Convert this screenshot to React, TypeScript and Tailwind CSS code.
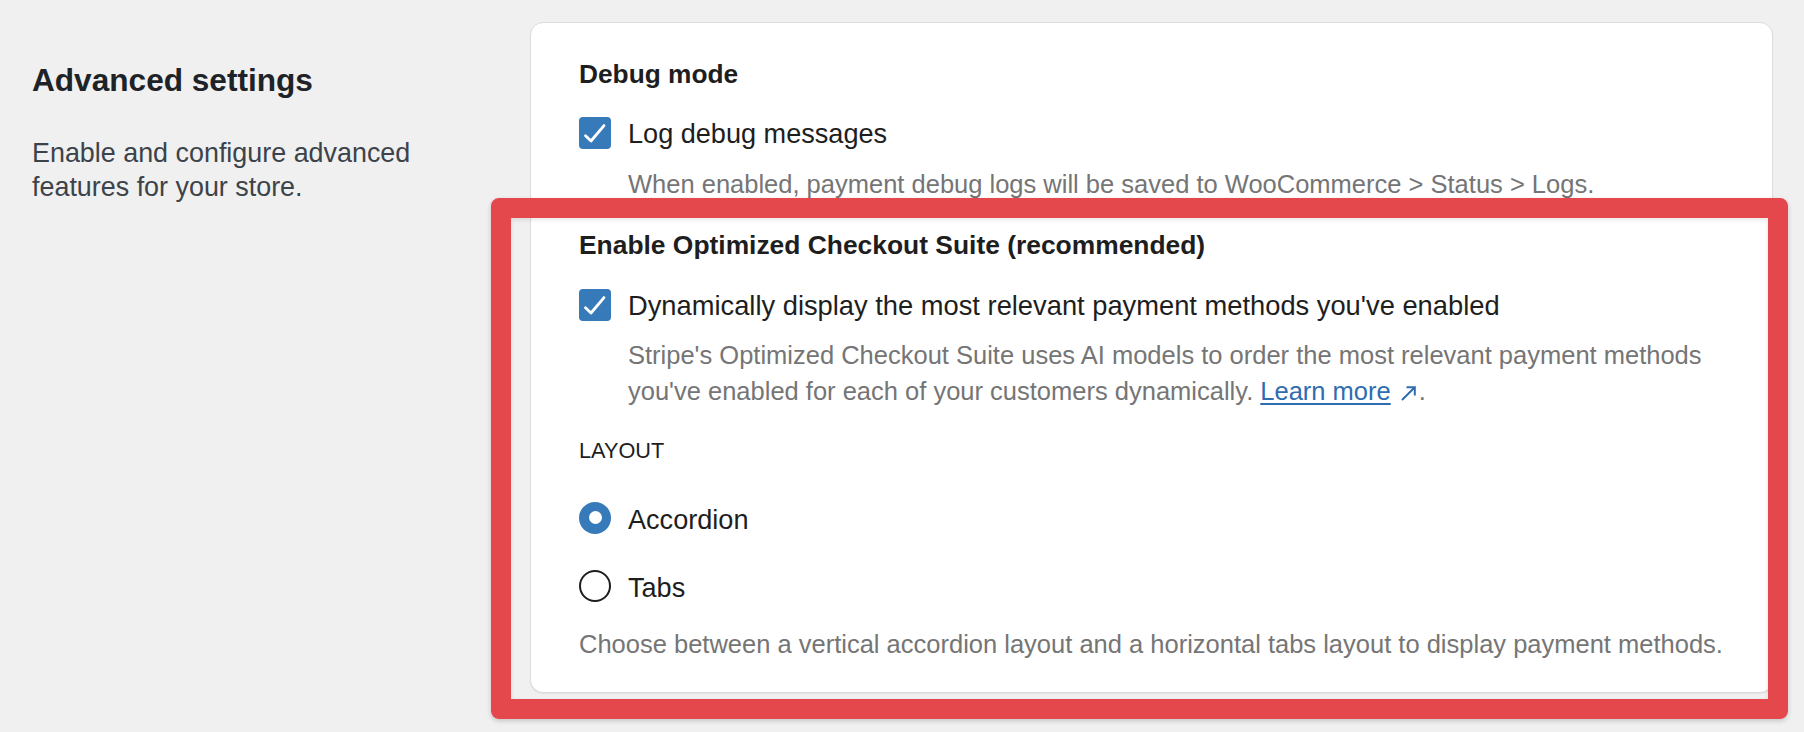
import React from "react";

function Checkbox() {
  return (
    <span className="w-[32px] h-[32px] shrink-0 rounded-[4px] bg-[#377ab9] flex items-center justify-center">
      <svg width="32" height="32" viewBox="0 0 32 32" fill="none">
        <polyline points="6.5,18.8 12,24 25,8.6" stroke="#ffffff" strokeWidth="2.8" strokeLinecap="round" strokeLinejoin="round" />
      </svg>
    </span>
  );
}

function Radio({ checked }: { checked: boolean }) {
  if (checked) {
    return (
      <span className="w-[32px] h-[32px] shrink-0 rounded-full bg-[#377ab9] flex items-center justify-center">
        <span className="w-[13px] h-[13px] rounded-full bg-white" />
      </span>
    );
  }
  return <span className="w-[32px] h-[32px] shrink-0 rounded-full border-2 border-[#1e1e1e] bg-white" />;
}

export default function App() {
  return (
    <div className="relative w-[1804px] h-[732px] overflow-hidden bg-[#f0f0f0] flex font-['Liberation_Sans',Arial,sans-serif]">
      {/* Left column */}
      <div className="w-[530px] shrink-0 pl-[32px] pt-[60px]">
        <h2 className="text-[31.6px] leading-[40px] font-bold text-[#1d2327]">Advanced settings</h2>
        <p className="mt-[36px] max-w-[420px] text-[26.9px] leading-[34.4px] text-[#3c434a]">
          Enable and configure advanced features for your store.
        </p>
      </div>

      {/* Card */}
      <div className="w-[1243px] shrink-0 self-start mt-[22px] bg-white border border-[#dcdcde] rounded-[13px] shadow-[0_1px_1px_rgba(0,0,0,0.06)] px-[48px] pt-[33px] pb-[30px] flex flex-col">
        <div className="text-[26.3px] leading-[36px] font-bold text-[#1e1e1e] whitespace-nowrap">Debug mode</div>

        <div className="mt-[25px] flex items-start gap-[17px]">
          <Checkbox />
          <span className="text-[27.1px] leading-[34px] text-[#1e1e1e] whitespace-nowrap">Log debug messages</span>
        </div>

        <div className="mt-[14.6px] ml-[49px] text-[25.5px] leading-[36px] text-[#757575] whitespace-nowrap">
          When enabled, payment debug logs will be saved to WooCommerce &gt; Status &gt; Logs.
        </div>

        <div className="mt-[25.3px] text-[26.4px] leading-[36px] font-bold text-[#1e1e1e] whitespace-nowrap">
          Enable Optimized Checkout Suite (recommended)
        </div>

        <div className="mt-[26px] flex items-start gap-[17px]">
          <Checkbox />
          <span className="text-[27.3px] leading-[34px] text-[#1e1e1e] whitespace-nowrap">
            Dynamically display the most relevant payment methods you've enabled
          </span>
        </div>

        <div className="mt-[14.3px] ml-[49px] text-[25.5px] leading-[36px] text-[#757575] whitespace-nowrap">
          Stripe's Optimized Checkout Suite uses AI models to order the most relevant payment methods
          <br />
          you've enabled for each of your customers dynamically.{" "}
          <span className="text-[#2f6cb0] underline decoration-[1.5px] underline-offset-[3px]">Learn more</span>
          <span className="inline-block ml-[10px] mr-[3px] align-baseline">
            <svg width="15" height="15" viewBox="0 0 15 15" fill="none" className="inline-block">
              <path d="M1 14 L13.5 1.5 M5.5 1.2 H13.8 V9.5" stroke="#2f6cb0" strokeWidth="2" strokeLinecap="butt" strokeLinejoin="miter" />
            </svg>
          </span>
          .
        </div>

        <div className="mt-[26.5px] text-[21.7px] leading-[30px] text-[#1e1e1e] uppercase whitespace-nowrap">Layout</div>

        <div className="mt-[36.2px] flex items-start gap-[17px]">
          <Radio checked />
          <span className="text-[27.1px] leading-[35px] text-[#1e1e1e]">Accordion</span>
        </div>

        <div className="mt-[33px] flex items-start gap-[17px]">
          <Radio checked={false} />
          <span className="text-[27.1px] leading-[35px] text-[#1e1e1e]">Tabs</span>
        </div>

        <div className="mt-[21.6px] text-[25.5px] leading-[36px] text-[#757575] whitespace-nowrap">
          Choose between a vertical accordion layout and a horizontal tabs layout to display payment methods.
        </div>
      </div>

      {/* Red highlight annotation */}
      <div className="absolute left-[491px] top-[197.5px] w-[1297px] h-[521px] border-[20px] border-[#e4474c] rounded-[8px] shadow-[0_2px_5px_rgba(0,0,0,0.18),inset_0_2px_4px_rgba(0,0,0,0.10)] pointer-events-none" />
    </div>
  );
}
